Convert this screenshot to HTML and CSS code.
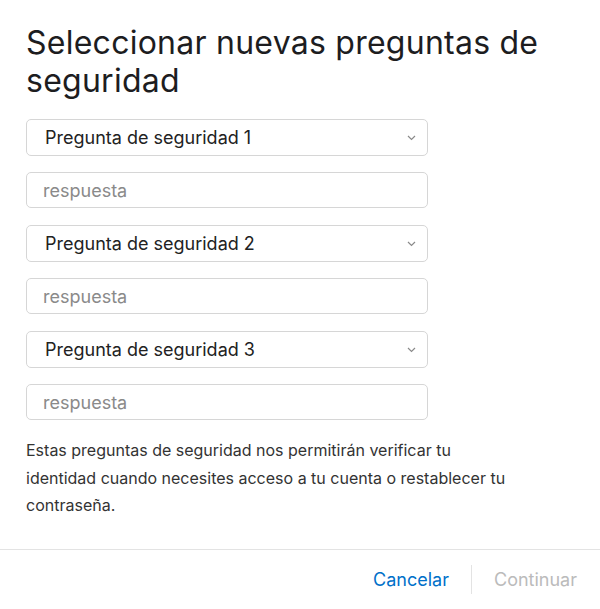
FILE: index.html
```html
<!DOCTYPE html>
<html lang="es">
<head>
    <meta charset="UTF-8">
    <meta name="viewport" content="width=device-width, initial-scale=1.0">
    <title>Preguntas de seguridad</title>
    <link rel="stylesheet" href="styles.css">
</head>
<body>
    <div class="dialogo">
        <div class="contenido">
            <h1>Seleccionar nuevas preguntas de seguridad</h1>

            <div class="campos">
                <div class="selector">
                    <select>
                        <option>Pregunta de seguridad 1</option>
                    </select>
                    <svg class="flecha" width="9" height="6" viewBox="0 0 9 6"><path d="M1 1l3.5 3.5L8 1" fill="none" stroke="#8a8a8a" stroke-width="1.2"/></svg>
                </div>
                <input type="text" placeholder="respuesta">

                <div class="selector">
                    <select>
                        <option>Pregunta de seguridad 2</option>
                    </select>
                    <svg class="flecha" width="9" height="6" viewBox="0 0 9 6"><path d="M1 1l3.5 3.5L8 1" fill="none" stroke="#8a8a8a" stroke-width="1.2"/></svg>
                </div>
                <input type="text" placeholder="respuesta">

                <div class="selector">
                    <select>
                        <option>Pregunta de seguridad 3</option>
                    </select>
                    <svg class="flecha" width="9" height="6" viewBox="0 0 9 6"><path d="M1 1l3.5 3.5L8 1" fill="none" stroke="#8a8a8a" stroke-width="1.2"/></svg>
                </div>
                <input type="text" placeholder="respuesta">
            </div>

            <p class="nota">Estas preguntas de seguridad nos permitirán verificar tu identidad cuando necesites acceso a tu cuenta o restablecer tu contraseña.</p>
        </div>

        <div class="pie">
            <button class="boton cancelar">Cancelar</button>
            <span class="separador"></span>
            <button class="boton continuar" disabled>Continuar</button>
        </div>
    </div>
</body>
</html>
```

FILE: styles.css
```css
body {
    font-family: Inter, "Noto Sans", sans-serif;
    margin: 0;
    background: #fff;
    color: #333;
}
.contenido {
    padding: 24px 26px 0 26px;
}
h1 {
    font-size: 32px;
    font-weight: 400;
    line-height: 38px;
    letter-spacing: 0.25px;
    color: #1d1d1f;
    margin: 0 0 19px 0;
}
.campos {
    display: flex;
    flex-direction: column;
    width: 402px;
}
.selector {
    position: relative;
    margin-bottom: 16px;
}
select {
    appearance: none;
    -webkit-appearance: none;
    width: 100%;
    height: 37px;
    padding: 0 30px 0 18px;
    font-family: inherit;
    font-size: 18px;
    color: #222;
    background: #fff;
    border: 1px solid #d6d6d6;
    border-radius: 5px;
}
.flecha {
    position: absolute;
    right: 12px;
    top: 16px;
}
input[type="text"] {
    box-sizing: border-box;
    height: 36px;
    padding: 0 16px;
    font-family: inherit;
    font-size: 18px;
    color: #222;
    border: 1px solid #d6d6d6;
    border-radius: 5px;
    margin-bottom: 17px;
}
input::placeholder {
    color: #8a8a8a;
}
.nota {
    max-width: 490px;
    font-size: 16px;
    line-height: 27.5px;
    margin: 0;
    color: #333;
}
.pie {
    margin-top: 29px;
    border-top: 1px solid #e3e3e3;
    height: 59px;
    display: flex;
    justify-content: flex-end;
    align-items: center;
    padding-right: 23px;
}
.boton {
    background: none;
    border: none;
    font-family: inherit;
    font-size: 18px;
    padding: 0;
    cursor: pointer;
}
.cancelar {
    color: #0070c9;
}
.continuar {
    color: #bbbbbb;
}
.separador {
    width: 1px;
    height: 29px;
    background: #e3e3e3;
    margin: 0 22px;
}
```
